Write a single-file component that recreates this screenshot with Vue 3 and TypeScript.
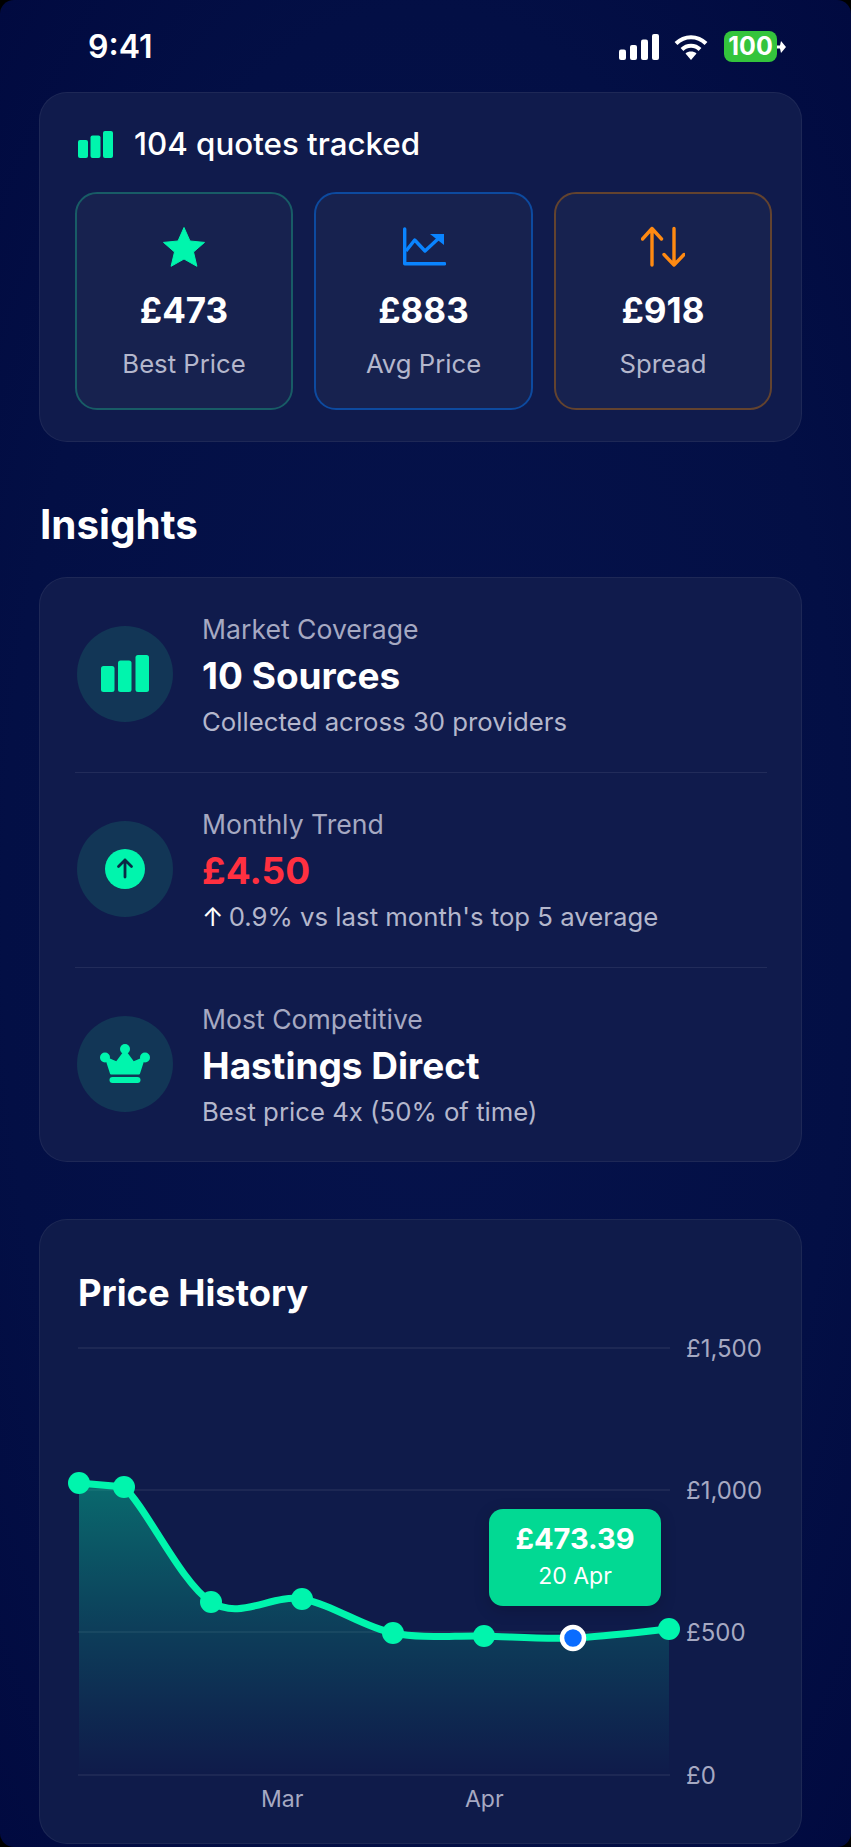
<template>
  <div class="screen">
    <div class="status-bar">
      <span class="time">9:41</span>
      <div class="status-icons">
        <svg class="signal" width="41" height="26" viewBox="0 0 41 26">
          <rect x="0" y="15.500" width="7" height="10.500" rx="2" />
          <rect x="11" y="11" width="7" height="15" rx="2" />
          <rect x="22" y="5.500" width="7" height="20.500" rx="2" />
          <rect x="33" y="0" width="7" height="26" rx="2" />
        </svg>
        <svg class="wifi" width="34" height="26" viewBox="0 0 34 26" fill="none" stroke="#fff" stroke-width="4">
          <path d="M2 9.500C10.500 1 23.500 1 32 9.500" />
          <path d="M8 15.500C13 10.500 21 10.500 26 15.500" />
          <path d="M17 26l-5.500-6.500c3-2.600 8-2.600 11 0z" fill="#fff" stroke="none" />
        </svg>
        <div class="battery">
          <span class="battery-level">100</span>
          <svg class="bolt" width="9" height="12" viewBox="0 0 9 12"><path d="M4 0L3 4.500H0v3h3L4 12l5-6z" fill="#fff" /></svg>
        </div>
      </div>
    </div>

    <section class="card summary">
      <div class="summary-head">
        <svg width="35" height="27" viewBox="0 0 35 27">
          <rect x="0" y="9" width="10" height="18" rx="2" />
          <rect x="12.500" y="4.500" width="10" height="22.500" rx="2" />
          <rect x="25" y="0" width="10" height="27" rx="2" />
        </svg>
        <span>104 quotes tracked</span>
      </div>
      <div class="stats">
        <div class="stat stat-green">
          <svg width="44" height="44" viewBox="0 0 44 44">
            <path d="M22 1.500l6 13.500 14.500 1.400-11 9.600 3.400 14.300L22 33l-12.900 7.300 3.400-14.300-11-9.600L16 15z" fill="#00f5ad" stroke="#00f5ad" stroke-width="1" stroke-linejoin="round" />
          </svg>
          <div class="stat-value">£473</div>
          <div class="stat-label">Best Price</div>
        </div>
        <div class="stat stat-blue">
          <svg width="44" height="44" viewBox="0 0 44 44" fill="none" stroke="#0a84ff" stroke-width="3.400">
            <path d="M2.700 3v34.700h40" stroke-linecap="round" stroke-linejoin="round" />
            <path d="M4 25l8.700-11L23 25l14-13" stroke-linejoin="round" />
            <path d="M28 8h14v11z" fill="#0a84ff" stroke="none" />
          </svg>
          <div class="stat-value">£883</div>
          <div class="stat-label">Avg Price</div>
        </div>
        <div class="stat stat-orange">
          <svg width="44" height="44" viewBox="0 0 44 44" fill="none" stroke="#ff8a12" stroke-width="3.400" stroke-linecap="round" stroke-linejoin="round">
            <path d="M11 39V2.500M1.500 13L11 2.500 20.500 13" />
            <path d="M33 2.500V39M23 28.500L33 39l10-10.500" />
          </svg>
          <div class="stat-value">£918</div>
          <div class="stat-label">Spread</div>
        </div>
      </div>
    </section>

    <h2 class="section-title">Insights</h2>

    <section class="card insights">
      <div class="insight">
        <div class="insight-icon">
          <svg width="48" height="37" viewBox="0 0 48 37">
            <rect x="0" y="11" width="13.500" height="26" rx="2.500" />
            <rect x="17" y="5.500" width="13.500" height="31.500" rx="2.500" />
            <rect x="34.500" y="0" width="13.500" height="37" rx="2.500" />
          </svg>
        </div>
        <div class="insight-text">
          <div class="insight-label">Market Coverage</div>
          <div class="insight-value">10 Sources</div>
          <div class="insight-sub">Collected across 30 providers</div>
        </div>
      </div>
      <div class="insight">
        <div class="insight-icon">
          <svg width="40" height="40" viewBox="0 0 40 40">
            <circle cx="20" cy="20" r="20" fill="#00f5ad" />
            <path d="M20 28V11M13.500 17.500L20 11l6.500 6.500" fill="none" stroke="#0a2a45" stroke-width="2.800" stroke-linecap="round" stroke-linejoin="round" />
          </svg>
        </div>
        <div class="insight-text">
          <div class="insight-label">Monthly Trend</div>
          <div class="insight-value red">£4.50</div>
          <div class="insight-sub"><span class="up">↑</span> 0.9% vs last month's top 5 average</div>
        </div>
      </div>
      <div class="insight">
        <div class="insight-icon">
          <svg width="50" height="40" viewBox="0 0 50 40">
            <circle cx="25" cy="5" r="5" />
            <circle cx="5" cy="13.500" r="5" />
            <circle cx="45" cy="13.500" r="5" />
            <path d="M6 14l10.500 4.500L25 7l8.500 11.500L44 14l-5 15.500H11z" stroke="#00f5ad" stroke-width="2" stroke-linejoin="round" />
            <rect x="9.500" y="33" width="31" height="6" rx="3" />
          </svg>
        </div>
        <div class="insight-text">
          <div class="insight-label">Most Competitive</div>
          <div class="insight-value">Hastings Direct</div>
          <div class="insight-sub">Best price 4x (50% of time)</div>
        </div>
      </div>
    </section>

    <section class="card history">
      <h3 class="history-title">Price History</h3>
      <div class="chart">
        <svg width="763" height="470" viewBox="0 0 763 470">
          <defs>
            <linearGradient id="area" x1="0" y1="0" x2="0" y2="1">
              <stop offset="0" stop-color="#00f5ad" stop-opacity="0.36" />
              <stop offset="0.5" stop-color="#00f5ad" stop-opacity="0.16" />
              <stop offset="0.8" stop-color="#00f5ad" stop-opacity="0.06" />
              <stop offset="1" stop-color="#00f5ad" stop-opacity="0" />
            </linearGradient>
          </defs>
          <line v-for="t in ticks" :key="t.label" x1="39" x2="631" :y1="t.y" :y2="t.y" class="grid" />
          <path :d="areaPath" fill="url(#area)" />
          <path :d="linePath" fill="none" stroke="#00f5ad" stroke-width="7" stroke-linecap="round" />
          <circle v-for="p in points" :key="p.x" :cx="p.x" :cy="p.y" r="11" fill="#00f5ad" />
          <circle :cx="active.x" :cy="active.y" r="11" fill="#0a6cff" stroke="#fff" stroke-width="4.500" />
          <text v-for="t in ticks" :key="t.label + 'y'" x="647" :y="t.y + 8.500" class="axis">{{ t.label }}</text>
          <text x="222" y="461" class="axis month">Mar</text>
          <text x="426" y="461" class="axis month">Apr</text>
        </svg>
        <div class="tooltip">
          <div class="tooltip-price">£473.39</div>
          <div class="tooltip-date">20 Apr</div>
        </div>
      </div>
    </section>
  </div>
</template>

<script setup lang="ts">
// chart coordinates are relative to the svg, which starts at card left / 1346 on the page
const top = 1346
const left = 39

const raw = [
  [79, 1483],
  [124, 1487],
  [211, 1602],
  [302, 1599],
  [393, 1633],
  [484, 1636],
  [573, 1638],
  [669, 1629],
]

const points = raw.map(([x, y]) => ({ x: x - left, y: y - top }))
const active = points[6]

const ticks = [
  { label: '£1,500', y: 2 },
  { label: '£1,000', y: 144 },
  { label: '£500', y: 286 },
  { label: '£0', y: 429 },
]

// catmull-rom through the points, first segment stays straight
function smooth(): string {
  let d = `M${points[0].x} ${points[0].y}L${points[1].x} ${points[1].y}`
  for (let i = 1; i < points.length - 1; i++) {
    const p0 = points[i - 1]
    const p1 = points[i]
    const p2 = points[i + 1]
    const p3 = points[i + 2] ?? p2
    const c1x = p1.x + (p2.x - p0.x) / 6
    const c1y = p1.y + (p2.y - p0.y) / 6
    const c2x = p2.x - (p3.x - p1.x) / 6
    const c2y = p2.y - (p3.y - p1.y) / 6
    d += `C${c1x} ${c1y} ${c2x} ${c2y} ${p2.x} ${p2.y}`
  }
  return d
}

const linePath = smooth()
const areaPath = `${linePath}L${points[7].x} 429L${points[0].x} 429Z`
</script>

<style>
html,
body {
  margin: 0;
  background: #000;
}
</style>

<style scoped>
.screen {
  width: 851px;
  height: 1847px;
  box-sizing: border-box;
  padding: 0 49px 0 39px;
  overflow: hidden;
  border-radius: 14px;
  background: radial-gradient(ellipse at 50% 50%, #06134c 0%, #030f45 70%, #010a40 100%);
  color: #fff;
  font-family: Inter, "Liberation Sans", sans-serif;
}

.status-bar {
  height: 92px;
  display: flex;
  align-items: center;
  justify-content: space-between;
  box-sizing: border-box;
  padding: 1px 0 0 49px;
  margin-right: 16px;
}

.time {
  font-size: 32px;
  font-weight: 600;
  line-height: 1;
}

.status-icons {
  display: flex;
  align-items: center;
  gap: 14px;
}

.wifi {
  margin-right: 2px;
}

.signal rect {
  fill: #fff;
}

.battery {
  display: flex;
  align-items: center;
}

.battery-level {
  width: 53px;
  height: 31px;
  border-radius: 8px;
  background: #34c43c;
  font-size: 25px;
  font-weight: 700;
  line-height: 31px;
  text-align: center;
}

.card {
  box-sizing: border-box;
  width: 763px;
  border: 1px solid rgba(255, 255, 255, 0.06);
  border-radius: 28px;
  background: #101b4c;
}

.summary {
  height: 350px;
  padding: 36px 29px 0 35px;
}

.summary-head {
  display: flex;
  align-items: center;
  gap: 21px;
  padding-left: 3px;
  font-size: 31.300px;
  font-weight: 500;
  line-height: 30px;
}

.summary-head rect {
  fill: #00f5ad;
}

.stats {
  display: grid;
  grid-template-columns: 218px 219px 218px;
  gap: 21px;
  margin-top: 33px;
}

.stat {
  height: 218px;
  box-sizing: border-box;
  padding-top: 32px;
  border: 2px solid;
  border-radius: 22px;
  background: #17224f;
  text-align: center;
}

.stat svg {
  display: block;
  margin: 0 auto;
}

.stat-green {
  border-color: #185c66;
}

.stat-blue {
  border-color: #0d4a9f;
}

.stat-orange {
  border-color: #63432f;
}

.stat-value {
  margin-top: 18px;
  font-size: 35px;
  font-weight: 700;
  line-height: 44px;
}

.stat-label {
  margin-top: 17px;
  font-size: 25.700px;
  line-height: 30px;
  color: #b4b7cc;
}

.section-title {
  margin: 60px 0 29px 1px;
  font-size: 40.400px;
  font-weight: 700;
  line-height: 46px;
}

.insights {
  height: 585px;
  padding: 0 34px 0 35px;
}

.insight {
  height: 195px;
  box-sizing: border-box;
  display: flex;
  align-items: center;
  gap: 29px;
  padding-left: 2px;
  border-bottom: 1px solid rgba(255, 255, 255, 0.08);
}

.insight:last-child {
  border-bottom: 0;
}

.insight-icon {
  width: 96px;
  height: 96px;
  flex: none;
  display: flex;
  align-items: center;
  justify-content: center;
  margin-top: -3px;
  border-radius: 50%;
  background: #123656;
}

.insight-icon svg {
  fill: #00f5ad;
}

.insight-label {
  font-size: 26.600px;
  line-height: 30px;
  color: #a6a9c2;
}

.insight-value {
  margin-top: 9px;
  font-size: 37px;
  font-weight: 700;
  line-height: 46px;
}

.insight-value.red {
  color: #ff3040;
}

.insight-sub {
  margin-top: 8px;
  font-size: 25.750px;
  line-height: 30px;
  color: #b4b7cc;
}

.up {
  margin-right: -2px;
  color: #fff;
}

.history {
  height: 625px;
  margin-top: 57px;
  padding: 0;
  background: #0f1b4a;
}

.history-title {
  margin: 51px 0 0 38px;
  font-size: 36.400px;
  font-weight: 700;
  line-height: 44px;
}

.chart {
  position: relative;
  margin-top: 31px;
  height: 470px;
}

.chart svg {
  display: block;
  margin-left: -1px;
  overflow: visible;
}

.grid {
  stroke: rgba(255, 255, 255, 0.08);
  stroke-width: 1.500;
}

.axis {
  fill: #a6a9c2;
  font-size: 24px;
}

.month {
  font-size: 23px;
}

.tooltip {
  position: absolute;
  left: 449px;
  top: 163px;
  width: 172px;
  height: 97px;
  box-sizing: border-box;
  padding-top: 12px;
  border-radius: 14px;
  background: #02d993;
  box-shadow: 0 4px 16px rgba(0, 0, 0, 0.18);
  text-align: center;
}

.tooltip-price {
  font-size: 29px;
  font-weight: 700;
  line-height: 36px;
}

.tooltip-date {
  margin-top: 5px;
  font-size: 23px;
  line-height: 28px;
}
</style>
